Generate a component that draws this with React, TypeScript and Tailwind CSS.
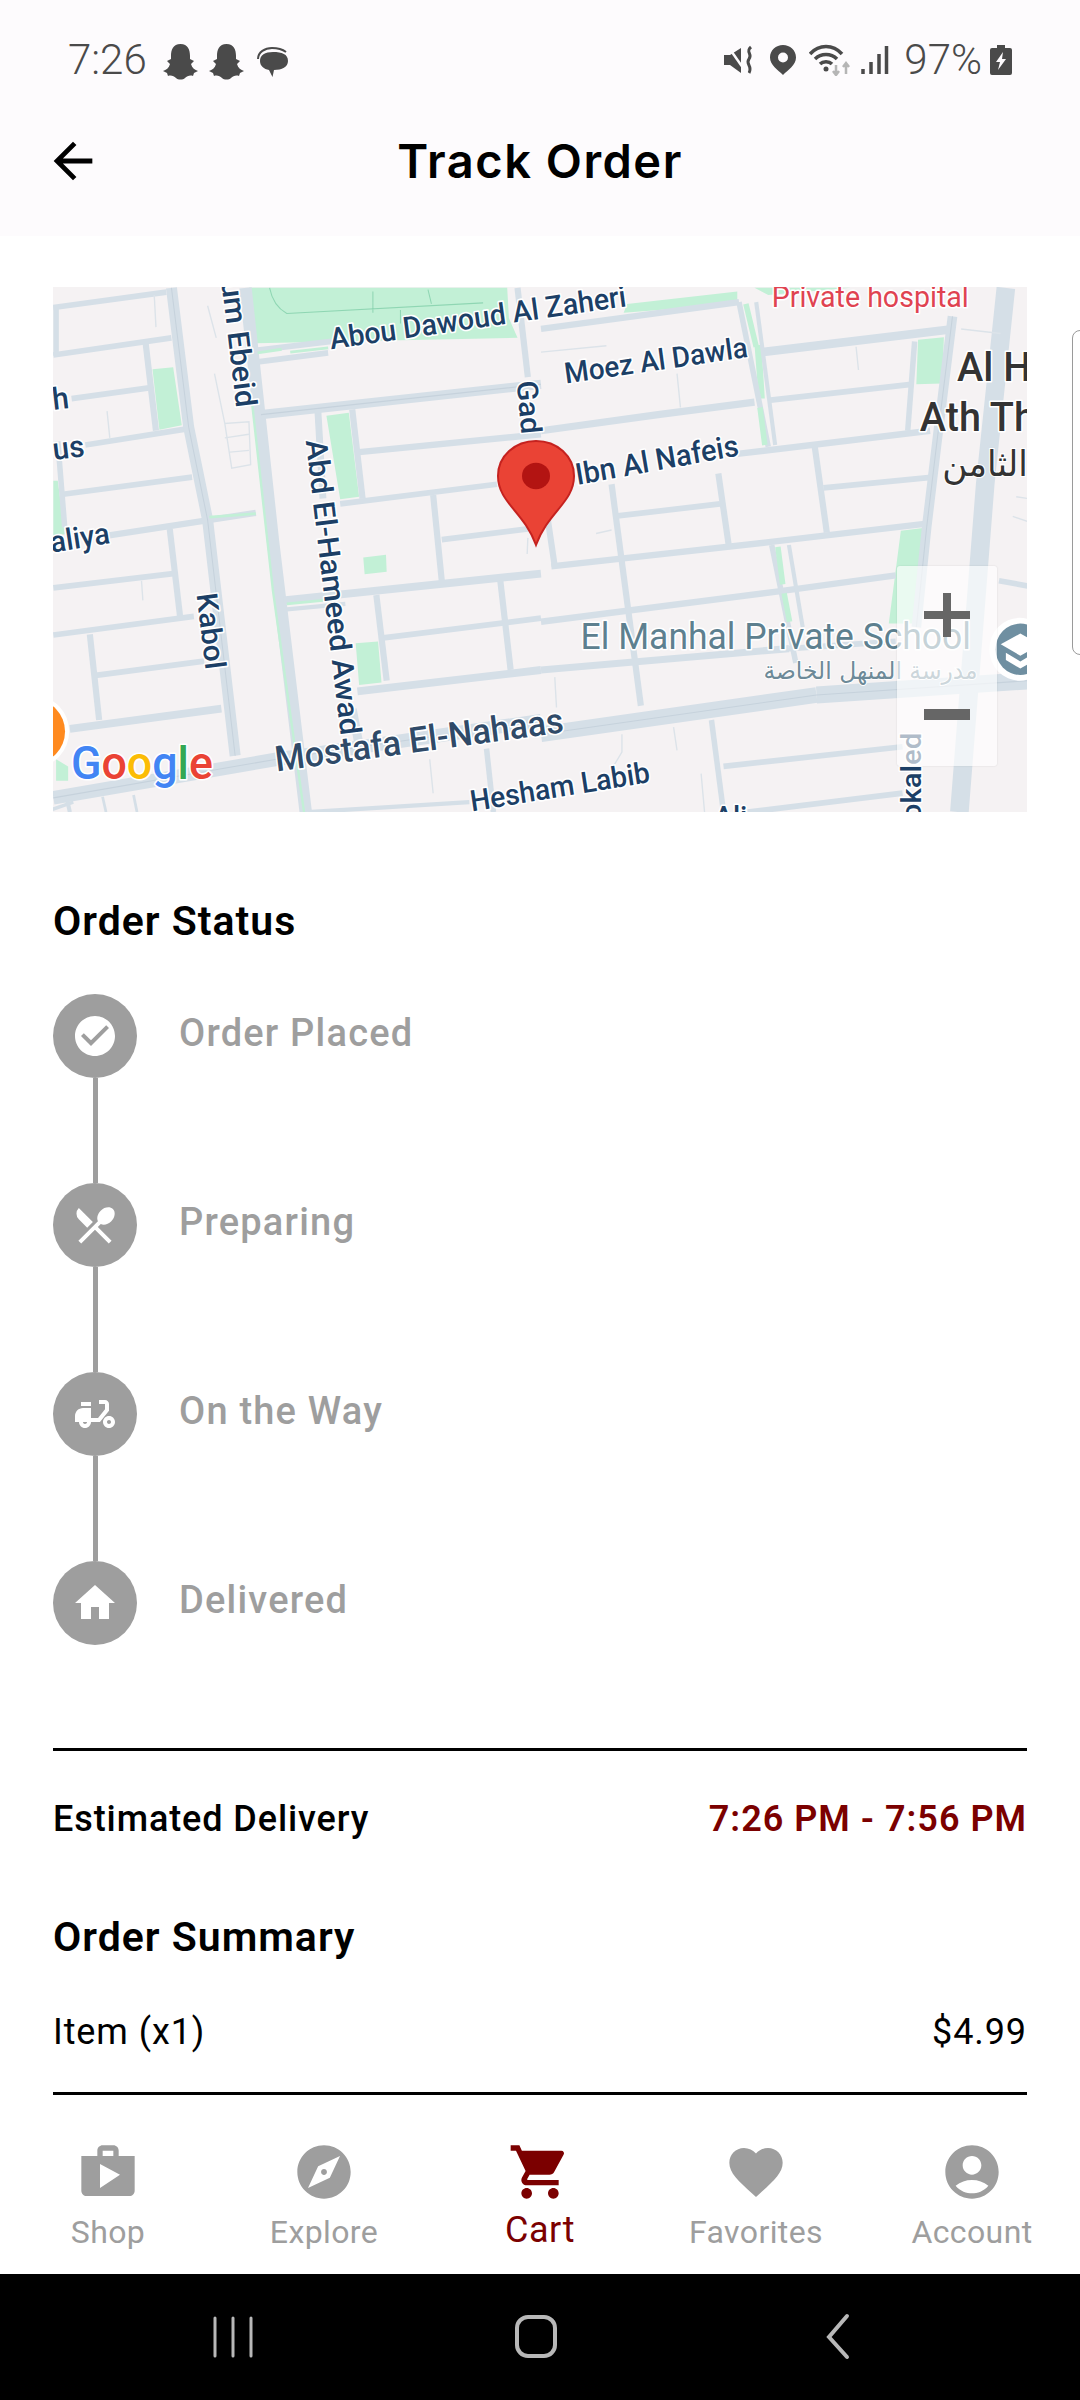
import { MdAccountCircle, MdArrowBack, MdCheckCircle, MdDeliveryDining, MdExplore, MdFavorite, MdHome, MdRestaurantMenu, MdShop, MdShoppingCart } from "react-icons/md";

const ROBOTO = "font-['Roboto',sans-serif]";

// map geometry is traced from crops of the reference, hence the scale on the groups
const leftRoads: [string, number][] = [
  ["152,105 480,62", 16],
  ["152,238 495,190", 16],
  ["205,360 430,330", 16],
  ["245,490 540,445", 16],
  ["180,628 555,580", 16],
  ["300,745 740,680", 18],
  ["152,890 500,850", 16],
  ["152,1022 560,970", 16],
  ["275,1135 590,1095", 16],
  ["200,1285 640,1228", 22],
  ["152,1478 800,1370 1568,1262", 38],
  ["495,50 545,440 600,700 680,1360", 32],
  ["710,50 790,760 885,1518", 36],
  ["420,205 450,450", 18],
  ["160,100 160,240", 16],
  ["165,480 185,720", 16],
  ["490,725 520,970", 18],
  ["258,1020 285,1260", 18],
  ["740,225 960,200", 16],
  ["740,258 950,232", 16],
  ["755,405 1568,320", 26],
  ["920,390 935,640", 20],
  ["1020,390 1050,640", 18],
  ["1040,510 1568,460", 18],
  ["985,655 1440,600", 16],
  ["1255,630 1280,870", 18],
  ["1280,755 1530,725", 16],
  ["820,925 1568,850", 22],
  ["830,950 1000,935", 12],
  ["1090,910 1120,1150", 18],
  ["1110,1030 1568,975", 16],
  ["1450,870 1480,1120", 18],
  ["1035,1180 1568,1120", 22],
  ["1500,50 1530,300", 18],
  ["1020,1230 1040,1330", 26],
  ["1410,1340 1430,1518", 16],
  ["890,1518 1360,1490", 12],
  ["150,1510 210,1490", 10],
  ["190,1475 200,1518", 12],
  ["295,1475 305,1518", 8],
  ["385,1470 395,1518", 8],
];

const leftThin: string[] = [
  "445,70 450,160",
  "308,395 316,470",
  "408,870 412,925",
  "600,100 625,190",
  "620,290 650,430 720,425 725,545 670,555 650,430",
  "650,470 720,460",
  "665,510 720,505",
  "1245,1370 1255,1465",
  "1530,750 1528,795",
];

const rightRoads: [string, number][] = [
  ["0,165 575,90", 18],
  ["640,230 1200,165", 24],
  ["0,450 340,405 620,370", 20],
  ["660,365 1075,320", 16],
  ["570,515 1130,450", 18],
  ["210,690 520,655", 16],
  ["30,830 680,760 1120,710", 18],
  ["0,985 690,900 1030,855", 18],
  ["820,610 1140,580", 16],
  ["575,90 660,495", 16],
  ["625,90 680,490", 12],
  ["1085,200 1065,450", 16],
  ["1195,130 1150,480 1120,720 1090,1000", 28],
  ["1350,50 1290,600 1215,1518", 54],
  ["205,600 290,1220", 18],
  ["515,570 545,770", 18],
  ["795,495 830,735", 18],
  ["670,770 740,1100", 16],
  ["720,770 760,1000", 12],
  ["495,1260 530,1518", 16],
  ["530,1390 1050,1335", 16],
  ["600,1518 1050,1465", 16],
  ["0,1300 800,1190", 44],
  ["800,1190 1415,1150", 48],
  ["0,1120 720,1060", 20],
  ["720,1060 1030,1040", 16],
  ["1330,870 1415,885", 16],
  ["20,700 40,830", 18],
];

const rightThin: string[] = [
  "395,290 405,385",
  "915,215 922,280",
  "160,738 205,728",
  "40,1140 45,1225",
  "385,1280 395,1345",
  "235,1300 235,1350 210,1390",
  "465,1410 475,1518",
  "0,230 190,212",
  "1370,690 1415,705",
  "1220,165 1335,178",
  "1380,635 1415,640",
];

function MapLabel({ x, y, rot = 0, size, color = "#1c3f66", weight = 500, font = "Roboto", children }: { x: number; y: number; rot?: number; size: number; color?: string; weight?: number; font?: string; children: React.ReactNode }) {
  return (
    <text
      x={x}
      y={y}
      transform={`rotate(${rot} ${x} ${y})`}
      fontFamily={font}
      fontSize={size}
      fontWeight={weight}
      fill={color}
      stroke="#ffffff"
      strokeWidth={9}
      strokeLinejoin="round"
      paintOrder="stroke"
    >
      {children}
    </text>
  );
}

function TrackMap() {
  return (
    <div className="relative h-[525px] overflow-hidden bg-[#f5f2f3]">
      <svg viewBox="0 0 976 525" className="block h-[525px] w-[976px]">
        <g transform="translate(-52 -17) scale(0.34435 0.35714)">
          <path d="M720 50H1470L1475 135L1500 190L740 205Z" fill="#c2f0d6" />
          <path d="M780 50Q790 100 830 122L1400 92M1080 60V120M1240 55L1250 95M1160 112V150" fill="none" stroke="#8fd6b3" strokeWidth="3" />
          <path d="M440 278L500 272L525 435L460 447ZM945 408L1010 400L1040 635L985 642ZM1052 805L1118 797L1120 845L1056 852ZM1030 1045L1095 1040L1105 1155L1040 1162ZM152 590L165 590L185 740L152 745ZM160 1370L195 1390L195 1430L160 1430Z" fill="#c2f0d6" />
          {leftRoads.map(([points, width]) => (
            <polyline key={points} points={points} fill="none" stroke="#d5dfe7" strokeWidth={width} />
          ))}
          {leftThin.map((points) => (
            <polyline key={points} points={points} fill="none" stroke="#dce3e9" strokeWidth={4} />
          ))}
          <path d="M495 50L545 440L600 700L680 1360M152 1478L800 1370L1568 1262M755 405L1568 320" fill="none" stroke="#c6d2dc" strokeWidth={3} />
          <path d="M730 380L790 900L880 1518" fill="none" stroke="#c2f0d6" strokeWidth={7} />
          <path d="M605 692L740 682M830 935L935 925M745 232L815 222M840 230L950 218" fill="none" stroke="#c2f0d6" strokeWidth={8} />
        </g>
        <g transform="translate(488 -17) scale(0.34435 0.35714)">
          <path d="M1095 195L1170 188L1165 318L1090 320ZM1045 730L1115 722L1090 990L1010 990ZM250 95L570 60L570 95L240 120ZM620 50H900L660 70ZM620 210L640 210L650 360L632 360Z" fill="#c2f0d6" />
          {rightRoads.map(([points, width]) => (
            <polyline key={points} points={points} fill="none" stroke="#d5dfe7" strokeWidth={width} />
          ))}
          {rightThin.map((points) => (
            <polyline key={points} points={points} fill="none" stroke="#dce3e9" strokeWidth={4} />
          ))}
          <path d="M0 1300L800 1190L1415 1150M1195 130L1150 480L1120 720L1090 1000" fill="none" stroke="#c6d2dc" strokeWidth={3} />
          <path d="M595 95L625 215M636 385L650 490M688 775L702 880M706 905L722 985" fill="none" stroke="#c2f0d6" strokeWidth={16} />
        </g>

        <g transform="translate(-52 -17) scale(0.34435 0.35714)">
          <MapLabel x={640} y={32} rot={83} size={86}>um Ebeid</MapLabel>
          <MapLabel x={958} y={222} rot={-8} size={83}>Abou Dawoud Al Zaheri</MapLabel>
          <MapLabel x={1498} y={312} rot={85} size={84}>Gad I</MapLabel>
          <MapLabel x={885} y={478} rot={83} size={86}>Abd El-Hameed Awad</MapLabel>
          <MapLabel x={568} y={908} rot={83} size={84}>Kabol</MapLabel>
          <MapLabel x={105} y={398} rot={-7} size={86}>Jh</MapLabel>
          <MapLabel x={105} y={538} rot={-7} size={86}>ous</MapLabel>
          <MapLabel x={95} y={800} rot={-9} size={84}>Kaliya</MapLabel>
          <MapLabel x={800} y={1404} rot={-7.5} size={99} color="#2f4a68">Mostafa El-Nahaas</MapLabel>
          <MapLabel x={1367} y={1516} rot={-9} size={82}>Hesham Labib</MapLabel>
          <MapLabel x={203} y={1425} size={130}>
            <tspan fill="#4285f4">G</tspan>
            <tspan fill="#ea4335">o</tspan>
            <tspan fill="#fbbc05">o</tspan>
            <tspan fill="#4285f4">g</tspan>
            <tspan fill="#34a853">l</tspan>
            <tspan fill="#ea4335">e</tspan>
          </MapLabel>
          <circle cx="98" cy="1292" r="100" fill="#ffffff" />
          <circle cx="98" cy="1292" r="88" fill="#ff8a1f" />
        </g>
        <g transform="translate(488 -17) scale(0.34435 0.35714)">
          <MapLabel x={72} y={318} rot={-8} size={81}>Moez Al Dawla</MapLabel>
          <MapLabel x={105} y={602} rot={-10} size={84}>Ibn Al Nafeis</MapLabel>
          <MapLabel x={670} y={105} size={83} color="#e04351" weight={400}>Private hospital</MapLabel>
          <MapLabel x={1208} y={310} size={115} color="#333333">Al Hadi</MapLabel>
          <MapLabel x={1100} y={450} size={115} color="#333333">Ath Thamin</MapLabel>
          <text x={1414} y={578} direction="rtl" fontFamily="DejaVu Sans" fontSize={100} fill="#333333" stroke="#ffffff" strokeWidth={6} paintOrder="stroke">الثامن</text>
          <MapLabel x={115} y={1060} size={103} color="#5d808f" weight={400}>El Manhal Private School</MapLabel>
          <text x={1268} y={1145} direction="rtl" fontFamily="DejaVu Sans" fontSize={68} fill="#6d8a98" stroke="#ffffff" strokeWidth={5} paintOrder="stroke">مدرسة المنهل الخاصة</text>
          <MapLabel x={1103} y={1590} rot={-90} size={82}>Sokaled</MapLabel>
          <MapLabel x={503} y={1560} size={82}>Ali</MapLabel>
          <circle cx="1390" cy="1062" r="88" fill="#ffffff" />
          <circle cx="1392" cy="1062" r="72" fill="#6f8fa1" />
          <path d="M1392 1018L1450 1048L1392 1080L1335 1048ZM1350 1072L1392 1096L1435 1072V1092L1392 1116L1350 1092Z" fill="#ffffff" />
        </g>
        <g transform="translate(431 154) scale(1 0.945)">
          <path d="M52 0C31 0 14 16 14 37C14 65 40 75 52 110C64 75 90 65 90 37C90 16 73 0 52 0Z" fill="#ea4335" stroke="#c5221f" strokeWidth="2" />
          <circle cx="52" cy="37" r="14" fill="#b31412" />
        </g>
      </svg>
      {/* zoom controls sit on top of the map */}
      <div className="absolute left-[844px] top-[279px] flex h-[200px] w-[100px] flex-col items-center justify-between rounded-[3px] bg-white/65 pb-[46px] pt-[27px] shadow-[0_0_2px_rgba(0,0,0,0.12)]">
        <svg width="46" height="44" viewBox="0 0 46 44">
          <path d="M19 0H27V18H46V26H27V44H19V26H0V18H19Z" fill="#666666" />
        </svg>
        <svg width="46" height="11" viewBox="0 0 46 11">
          <rect width="46" height="11" fill="#666666" />
        </svg>
      </div>
    </div>
  );
}

const steps = [
  { label: "Order Placed", Icon: MdCheckCircle },
  { label: "Preparing", Icon: MdRestaurantMenu },
  { label: "On the Way", Icon: MdDeliveryDining },
  { label: "Delivered", Icon: MdHome },
];

const tabs = [
  { label: "Shop", Icon: MdShop },
  { label: "Explore", Icon: MdExplore },
  { label: "Cart", Icon: MdShoppingCart, active: true },
  { label: "Favorites", Icon: MdFavorite },
  { label: "Account", Icon: MdAccountCircle },
];

function Ghost() {
  return (
    <svg width="35" height="36" viewBox="0 0 35 36">
      <path d="M17.5 0C25 0 27 6 27 12V15L31 17L28 20C29 24 32 26 35 27L31 29L30 32C27 31 24 32 22 34C20 36 15 36 13 34C11 32 8 31 5 32L4 29L0 27C3 26 6 24 7 20L4 17L8 15V12C8 6 10 0 17.5 0Z" fill="#4a4a4a" />
    </svg>
  );
}

function StatusBar() {
  return (
    <div className={`flex h-[120px] items-center justify-between px-[68px] text-[#4a4a4a] ${ROBOTO}`}>
      <div className="flex items-center">
        <span className="text-[42px] font-light leading-none">7:26</span>
        <div className="ml-[16px] mt-[4px] flex items-center gap-[11px]">
          <Ghost />
          <Ghost />
          <svg width="31" height="30" viewBox="0 0 31 30" className="ml-[2px]">
            <path d="M16 5C25 5 31 7 31 14C31 20 25 23 17 23L15.5 30L12 23C7 22 3 19 3 14C3 8 8 5 16 5Z" fill="#4a4a4a" />
            <path d="M1 12C1 5 8 1 15 1C20 1 25 2 29 5" fill="none" stroke="#4a4a4a" strokeWidth="2" />
          </svg>
        </div>
      </div>
      <div className="flex items-center">
        <svg width="30" height="30" viewBox="0 0 30 30">
          <path d="M0 10H6L17 3V28L6 20H0Z" fill="#4a4a4a" />
          <path d="M27 2C21 7 29 9 25 14C21 19 29 21 25 28" fill="none" stroke="#4a4a4a" strokeWidth="3" />
          <path d="M3 0L24 30" stroke="#fdfbfd" strokeWidth="2.5" />
        </svg>
        <svg width="26" height="30" viewBox="0 0 26 30" className="ml-[16px]">
          <path fillRule="evenodd" d="M13 0C20 0 26 5 26 12.5C26 20 18 25 13 30C8 25 0 20 0 12.5C0 5 6 0 13 0ZM13 7.5A5 5 0 1 0 13 17.5A5 5 0 1 0 13 7.5Z" fill="#4a4a4a" />
        </svg>
        <svg width="42" height="32" viewBox="0 0 42 32" className="ml-[13px]">
          <path d="M1 10C10 0 24 0 33 10M6 15C12 9 22 9 28 15M11 20C14 17 20 17 23 20" fill="none" stroke="#4a4a4a" strokeWidth="3.5" />
          <circle cx="17" cy="25" r="2.5" fill="#4a4a4a" />
          <path d="M27 21V30M24 27L27 31L30 27" fill="none" stroke="#b5b5b5" strokeWidth="2.5" />
          <path d="M37 30V20M34 23L37 19L40 23" fill="none" stroke="#b5b5b5" strokeWidth="2.5" />
        </svg>
        <svg width="28" height="30" viewBox="0 0 28 30" className="ml-[10px]">
          <path d="M2 24V29M10 17V29M18 9V29M25.5 1V29" stroke="#4a4a4a" strokeWidth="3.5" />
        </svg>
        <span className="ml-[15px] text-[42px] font-light leading-none">97%</span>
        <svg width="22" height="30" viewBox="0 0 22 30" className="ml-[8px]">
          <path fillRule="evenodd" d="M7 0H15V3H20Q22 3 22 5V28Q22 30 20 30H2Q0 30 0 28V5Q0 3 2 3H7ZM13 7L6 17H10L8 25L16 14H12Z" fill="#4a4a4a" />
        </svg>
      </div>
    </div>
  );
}

export default function App() {
  return (
    <div className={`relative flex h-[2400px] w-[1080px] flex-col overflow-hidden bg-white ${ROBOTO}`}>
      <header className="h-[236px] bg-[#fdfbfd]">
        <StatusBar />
        <div className="relative flex h-[80px] items-center justify-center">
          <MdArrowBack className="absolute left-[44px] top-[12px] text-black" size={58} />
          <h1 className="font-['Inter',sans-serif] text-[47px] font-semibold leading-none tracking-[1.5px] text-black">Track Order</h1>
        </div>
      </header>

      <main className="relative flex-1 px-[53px] pt-[51px]">
        <TrackMap />
        <div className="absolute right-[-6px] top-[94px] h-[325px] w-[14px] rounded-l-[8px] border border-[#9a9a9a] bg-white" />

        <h2 className="mt-[86px] text-[41px] font-semibold leading-[47px] tracking-[1px] text-black">Order Status</h2>

        <ol className="mt-[49px]">
          {steps.map(({ label, Icon }, i) => (
            <li key={label} className="flex">
              <div className="flex w-[84px] flex-col items-center">
                <span className="flex h-[84px] w-[84px] items-center justify-center rounded-full bg-[#9e9e9e] text-white">
                  <Icon size={48} />
                </span>
                {i < steps.length - 1 && <span className="h-[105px] w-[5px] bg-[#9e9e9e]" />}
              </div>
              <span className="ml-[42px] mt-[17px] text-[38px] font-medium leading-[45px] tracking-[1.2px] text-[#9e9e9e]">{label}</span>
            </li>
          ))}
        </ol>

        <div className="mt-[103px] h-[3px] bg-black" />

        <div className="mt-[47px] flex items-center justify-between text-[36px] font-medium leading-[42px] tracking-[0.9px]">
          <span className="text-black">Estimated Delivery</span>
          <span className="font-semibold tracking-[1px] text-[#7b0000]">7:26 PM - 7:56 PM</span>
        </div>

        <h2 className="mt-[74px] text-[41px] font-semibold leading-[47px] tracking-[1px] text-black">Order Summary</h2>

        <div className="mt-[50px] flex items-center justify-between text-[36px] leading-[42px] tracking-[0.9px] text-black">
          <span>Item (x1)</span>
          <span>$4.99</span>
        </div>

        <div className="mt-[39px] h-[3px] bg-black" />
      </main>

      <nav className="absolute bottom-[126px] left-0 grid h-[151px] w-[1080px] grid-cols-5 bg-white">
        {tabs.map(({ label, Icon, active }) => (
          <div key={label} className={`flex flex-col items-center pt-[17px] ${active ? "text-[#7b0000]" : "text-[#9e9e9e]"}`}>
            <Icon size={64} />
            <span className={active ? "mt-[5px] text-[36px] leading-[42px] tracking-[0.5px]" : "mt-[9px] text-[32px] leading-[38px] tracking-[0.4px]"}>{label}</span>
          </div>
        ))}
      </nav>

      <div className="absolute bottom-0 left-0 h-[126px] w-[1080px] bg-black">
        <svg width="1080" height="126" viewBox="0 0 1080 126">
          <path d="M215 44V82M233 44V82M251 44V82" stroke="#b8b8b8" strokeWidth="3" strokeLinecap="round" />
          <rect x="517" y="43" width="38" height="39" rx="11" fill="none" stroke="#b8b8b8" strokeWidth="4" />
          <path d="M847 42L829 63L847 83" fill="none" stroke="#b8b8b8" strokeWidth="4" strokeLinecap="round" />
        </svg>
      </div>
    </div>
  );
}
